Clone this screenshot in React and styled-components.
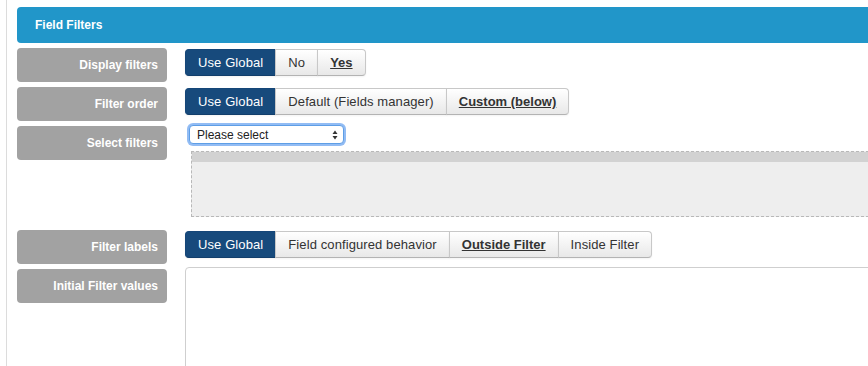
import React from "react";
import styled, { createGlobalStyle } from "styled-components";

const Global = createGlobalStyle`
  html, body { margin: 0; padding: 0; background: #fff; }
  body { font-family: "Liberation Sans", Arial, Helvetica, sans-serif; color: #333; }
`;

const Page = styled.div`
  width: 868px;
  height: 366px;
  overflow: hidden;
  box-sizing: border-box;
  padding-left: 6px;
`;

const Panel = styled.div`
  border-left: 1px solid #dcdcdc;
  height: 100%;
  box-sizing: border-box;
  padding: 7px 0 0 10px;
`;

const Header = styled.div`
  height: 36px;
  background: #2196c9;
  border-radius: 4px 0 0 4px;
  margin-right: -10px;
  display: flex;
  align-items: center;
  padding-left: 18px;
  color: #fff;
  font-weight: bold;
  font-size: 12px;
  margin-bottom: 5px;
`;

const Row = styled.div`
  display: flex;
  align-items: flex-start;
  gap: 18px;
  margin-bottom: 5px;
`;

const Label = styled.div`
  flex: 0 0 150px;
  height: 34px;
  box-sizing: border-box;
  background: #a2a2a2;
  border-radius: 4px;
  color: #fff;
  font-weight: bold;
  font-size: 12px;
  display: flex;
  align-items: center;
  justify-content: flex-end;
  padding-right: 9px;
`;

const Controls = styled.div`
  flex: 1;
  min-width: 0;
  display: flex;
  flex-direction: column;
  align-items: flex-start;
`;

const BtnGroup = styled.div`
  display: flex;
  margin-top: 1px;
`;

const Btn = styled.div`
  height: 27px;
  box-sizing: border-box;
  padding: 0 12px;
  display: flex;
  align-items: center;
  font-size: 13px;
  letter-spacing: ${(p) => (p.$bold ? "0" : "0.1px")};
  white-space: nowrap;
  border: 1px solid ${(p) => (p.$active ? "#154678" : "#c8c8c8")};
  border-bottom-color: ${(p) => (p.$active ? "#123e6b" : "#b3b3b3")};
  margin-left: -1px;
  color: ${(p) => (p.$active ? "#fff" : "#333")};
  background: ${(p) =>
    p.$active ? "#174a7c" : "linear-gradient(to bottom, #ffffff, #e8e8e8)"};
  font-weight: ${(p) => (p.$bold ? "bold" : "normal")};
  text-decoration: ${(p) => (p.$bold ? "underline" : "none")};
  box-shadow: 0 1px 2px rgba(0, 0, 0, 0.05);
  &:first-child {
    margin-left: 0;
    border-radius: 4px 0 0 4px;
  }
  &:last-child {
    border-radius: 0 4px 4px 0;
  }
`;

const Select = styled.div`
  margin: -1px 0 0 4px;
  width: 155px;
  height: 19px;
  box-sizing: border-box;
  border: 1px solid #5e9ee6;
  border-radius: 4px;
  box-shadow: 0 0 0 2px rgba(110, 165, 240, 0.75);
  background: #fff;
  display: flex;
  align-items: center;
  justify-content: space-between;
  padding: 0 5px 0 7px;
  font-size: 12px;
  color: #222;
`;

const Arrows = styled.svg`
  width: 6px;
  height: 10px;
`;

const DropZone = styled.div`
  margin: 7px 0 8px 6px;
  width: calc(100% + 40px);
  height: 66px;
  box-sizing: border-box;
  border: 1px dashed #b8b8b8;
  background: #eeeeee;
`;

const ZoneBar = styled.div`
  height: 10px;
  background: #d2d2d2;
`;

const ValuesBox = styled.div`
  margin-top: -2px;
  width: calc(100% + 40px);
  height: 120px;
  box-sizing: border-box;
  border: 1px solid #cfcfcf;
  border-radius: 4px 0 0 0;
  background: #fff;
`;

const groups = [
  {
    label: "Display filters",
    buttons: [
      { t: "Use Global", active: true },
      { t: "No" },
      { t: "Yes", bold: true },
    ],
  },
  {
    label: "Filter order",
    buttons: [
      { t: "Use Global", active: true },
      { t: "Default (Fields manager)" },
      { t: "Custom (below)", bold: true },
    ],
  },
];

const ButtonRow = ({ label, buttons }) => (
  <Row>
    <Label>{label}</Label>
    <Controls>
      <BtnGroup>
        {buttons.map((b) => (
          <Btn key={b.t} $active={b.active} $bold={b.bold}>
            {b.t}
          </Btn>
        ))}
      </BtnGroup>
    </Controls>
  </Row>
);

export default function App() {
  return (
    <>
      <Global />
      <Page>
        <Panel>
          <Header>Field Filters</Header>
          {groups.map((g) => (
            <ButtonRow key={g.label} {...g} />
          ))}
          <Row>
            <Label>Select filters</Label>
            <Controls>
              <Select>
                <span>Please select</span>
                <Arrows viewBox="0 0 6 10">
                  <path d="M3 0.5 L5.5 4 H0.5 Z" fill="#333" />
                  <path d="M3 9.5 L5.5 6 H0.5 Z" fill="#333" />
                </Arrows>
              </Select>
              <DropZone>
                <ZoneBar />
              </DropZone>
            </Controls>
          </Row>
          <ButtonRow
            label="Filter labels"
            buttons={[
              { t: "Use Global", active: true },
              { t: "Field configured behavior" },
              { t: "Outside Filter", bold: true },
              { t: "Inside Filter" },
            ]}
          />
          <Row>
            <Label>Initial Filter values</Label>
            <Controls>
              <ValuesBox />
            </Controls>
          </Row>
        </Panel>
      </Page>
    </>
  );
}
